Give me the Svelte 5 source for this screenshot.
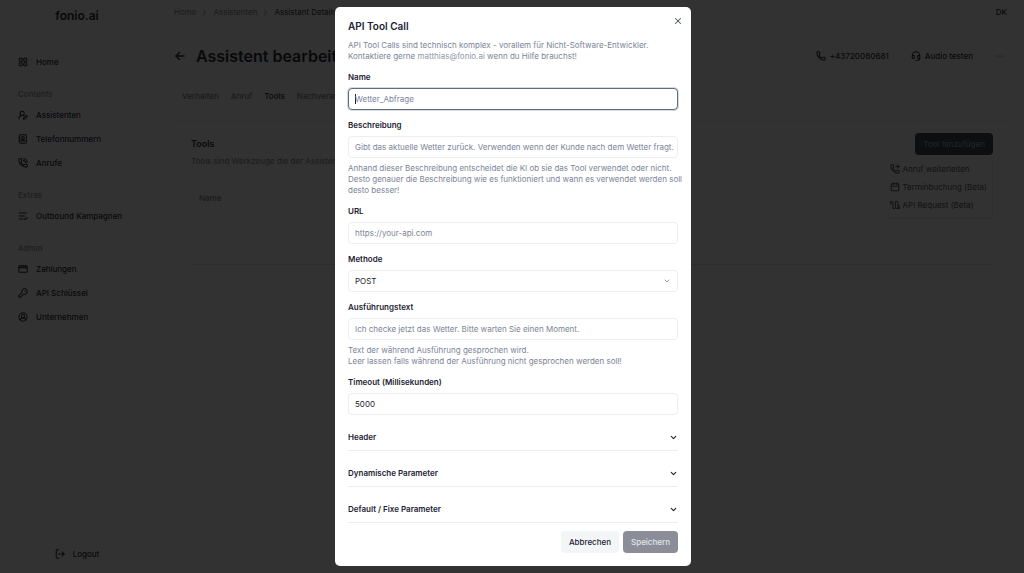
<script>
  const icons = {
    grid: ["M4 3h5a1 1 0 0 1 1 1v5a1 1 0 0 1-1 1H4a1 1 0 0 1-1-1V4a1 1 0 0 1 1-1z", "M15 3h5a1 1 0 0 1 1 1v5a1 1 0 0 1-1 1h-5a1 1 0 0 1-1-1V4a1 1 0 0 1 1-1z", "M15 14h5a1 1 0 0 1 1 1v5a1 1 0 0 1-1 1h-5a1 1 0 0 1-1-1v-5a1 1 0 0 1 1-1z", "M4 14h5a1 1 0 0 1 1 1v5a1 1 0 0 1-1 1H4a1 1 0 0 1-1-1v-5a1 1 0 0 1 1-1z"],
    userPen: ["M2 21a8 8 0 0 1 10.8-7.5", "M10 3a5 5 0 1 0 0 10a5 5 0 0 0 0-10z", "M21.4 16.6a2.1 2.1 0 0 0-3-3l-4 4a2 2 0 0 0-.5.9l-.8 2.8a.5.5 0 0 0 .6.6l2.8-.8a2 2 0 0 0 .9-.5z"],
    contact: ["M6 2h12a2 2 0 0 1 2 2v16a2 2 0 0 1-2 2H6a2 2 0 0 1-2-2V4a2 2 0 0 1 2-2z", "M12 6a3 3 0 1 0 0 6a3 3 0 0 0 0-6z", "M8 17v-1a2 2 0 0 1 2-2h4a2 2 0 0 1 2 2v1z", "M2 7h2", "M2 12h2", "M2 17h2"],
    phoneCall: ["M13.8 16.6a1 1 0 0 0 1.2-.3l.4-.5A2 2 0 0 1 17 15h3a2 2 0 0 1 2 2v3a2 2 0 0 1-2 2A18 18 0 0 1 2 4a2 2 0 0 1 2-2h3a2 2 0 0 1 2 2v3a2 2 0 0 1-.8 1.6l-.5.4a1 1 0 0 0-.3 1.2 14 14 0 0 0 6.4 6.4", "M13 2a9 9 0 0 1 9 9", "M13 6a5 5 0 0 1 5 5"],
    phone: ["M13.8 16.6a1 1 0 0 0 1.2-.3l.4-.5A2 2 0 0 1 17 15h3a2 2 0 0 1 2 2v3a2 2 0 0 1-2 2A18 18 0 0 1 2 4a2 2 0 0 1 2-2h3a2 2 0 0 1 2 2v3a2 2 0 0 1-.8 1.6l-.5.4a1 1 0 0 0-.3 1.2 14 14 0 0 0 6.4 6.4"],
    phoneForward: ["M13.8 16.6a1 1 0 0 0 1.2-.3l.4-.5A2 2 0 0 1 17 15h3a2 2 0 0 1 2 2v3a2 2 0 0 1-2 2A18 18 0 0 1 2 4a2 2 0 0 1 2-2h3a2 2 0 0 1 2 2v3a2 2 0 0 1-.8 1.6l-.5.4a1 1 0 0 0-.3 1.2 14 14 0 0 0 6.4 6.4", "M14 6h8", "M18 2l4 4-4 4"],
    list: ["M3 5h17", "M3 12h13", "M3 19h9", "M15 18l2.5 2.5L22 16"],
    card: ["M4 4h16a2 2 0 0 1 2 2v12a2 2 0 0 1-2 2H4a2 2 0 0 1-2-2V6a2 2 0 0 1 2-2z", "M2 9h20", "M7 4v5", "M12 4v5", "M17 4v5"],
    key: ["M2.6 17.4A2 2 0 0 0 2 18.8V21a1 1 0 0 0 1 1h3a1 1 0 0 0 1-1v-1a1 1 0 0 1 1-1h1a1 1 0 0 0 1-1v-1a1 1 0 0 1 1-1h.2a2 2 0 0 0 1.4-.6l.8-.8a6.5 6.5 0 1 0-4-4z", "M16.5 7.5h.01"],
    userCircle: ["M12 2a10 10 0 1 0 0 20a10 10 0 0 0 0-20z", "M12 6a4 4 0 1 0 0 8a4 4 0 0 0 0-8z", "M6 20v-2a3 3 0 0 1 3-3h6a3 3 0 0 1 3 3v2"],
    logout: ["M9 2H5a2 2 0 0 0-2 2v16a2 2 0 0 0 2 2h4", "M9 12h13", "M17 7l5 5-5 5"],
    arrowLeft: ["M11 19l-7-7 7-7", "M20 12H4"],
    headset: ["M3 11h3a2 2 0 0 1 2 2v3a2 2 0 0 1-2 2H5a2 2 0 0 1-2-2v-5a9 9 0 0 1 18 0v5a2 2 0 0 1-2 2h-1a2 2 0 0 1-2-2v-3a2 2 0 0 1 2-2h3", "M21 16v2a4 4 0 0 1-4 4h-5"],
    dots: ["M5 12h.01", "M12 12h.01", "M19 12h.01"],
    calendar: ["M5 4h14a2 2 0 0 1 2 2v13a2 2 0 0 1-2 2H5a2 2 0 0 1-2-2V6a2 2 0 0 1 2-2z", "M8 2v4", "M16 2v4", "M3 10h18"],
    route: ["M2 4h5v14a3 3 0 0 0 6 0V6a3 3 0 0 1 6 0v14", "M2 4v6", "M15 20h7", "M22 13v7"],
    chevronRight: ["M9 18l6-6-6-6"],
    chevronDown: ["M6 9l6 6 6-6"],
    close: ["M18 6L6 18", "M6 6l12 12"]
  }

  const navGroups = [
    { items: [{ icon: "grid", label: "Home" }] },
    {
      title: "Contents",
      items: [
        { icon: "userPen", label: "Assistenten" },
        { icon: "contact", label: "Telefonnummern" },
        { icon: "phoneCall", label: "Anrufe" }
      ]
    },
    { title: "Extras", items: [{ icon: "list", label: "Outbound Kampagnen" }] },
    {
      title: "Admin",
      items: [
        { icon: "card", label: "Zahlungen" },
        { icon: "key", label: "API Schlüssel" },
        { icon: "userCircle", label: "Unternehmen" }
      ]
    }
  ]

  const tabs = ["Verhalten", "Anruf", "Tools", "Nachverarbeitung"]

  const toolTypes = [
    { icon: "phoneForward", label: "Anruf weiterleiten" },
    { icon: "calendar", label: "Terminbuchung (Beta)" },
    { icon: "route", label: "API Request (Beta)" }
  ]

  const sections = ["Header", "Dynamische Parameter", "Default / Fixe Parameter"]

  let open = $state(true)
  let activeTab = $state("Tools")
  let name = $state("")
  let description = $state("")
  let url = $state("")
  let method = $state("POST")
  let speech = $state("")
  let timeout = $state("5000")

  let nameInput

  $effect(() => {
    if (open) nameInput?.focus()
  })
</script>

{#snippet icon(id)}
  <svg class="icon" viewBox="0 0 24 24" aria-hidden="true">
    {#each icons[id] as d}
      <path {d} />
    {/each}
  </svg>
{/snippet}

<div class="page">
  <aside>
    <a class="logo" href="#home">fonio.ai</a>
    <nav>
      {#each navGroups as group}
        <div class="group">
          {#if group.title}
            <h3>{group.title}</h3>
          {/if}
          {#each group.items as item}
            <a class="nav-item" href="#{item.icon}">{@render icon(item.icon)}{item.label}</a>
          {/each}
        </div>
      {/each}
    </nav>
    <button class="logout">{@render icon("logout")}Logout</button>
  </aside>

  <main>
    <header class="topbar">
      <div class="crumbs">
        <a href="#home">Home</a>
        {@render icon("chevronRight")}
        <a href="#assistants">Assistenten</a>
        {@render icon("chevronRight")}
        <span class="current">Assistant Details</span>
      </div>
      <span class="avatar">DK</span>
    </header>

    <div class="heading">
      <button class="back" aria-label="Zurück">{@render icon("arrowLeft")}</button>
      <h1>Assistent bearbeiten</h1>
      <div class="actions">
        <button>{@render icon("phone")}+43720080681</button>
        <button>{@render icon("headset")}Audio testen</button>
        <button aria-label="Mehr">{@render icon("dots")}</button>
      </div>
    </div>

    <div class="tabs" role="tablist">
      {#each tabs as tab}
        <button role="tab" aria-selected={tab === activeTab} class:active={tab === activeTab} onclick={() => (activeTab = tab)}>
          {tab}
        </button>
      {/each}
    </div>

    <section class="card">
      <div class="card-head">
        <div>
          <h2>Tools</h2>
          <p>Tools sind Werkzeuge die der Assistent verwenden kann.</p>
        </div>
        <div class="dropdown">
          <button class="add" onclick={() => (open = true)}>Tool hinzufügen</button>
          <div class="menu">
            {#each toolTypes as type}
              <button onclick={() => (open = true)}>{@render icon(type.icon)}{type.label}</button>
            {/each}
          </div>
        </div>
      </div>
      <table>
        <thead>
          <tr><th>Name</th></tr>
        </thead>
        <tbody>
          <tr><td></td></tr>
        </tbody>
      </table>
    </section>
  </main>
</div>

{#if open}
  <div class="overlay">
    <div class="dialog" role="dialog" aria-modal="true" aria-labelledby="dialog-title">
      <div class="title-row">
        <h2 id="dialog-title">API Tool Call</h2>
        <button class="close" aria-label="Schließen" onclick={() => (open = false)}>{@render icon("close")}</button>
      </div>
      <p class="intro">
        API Tool Calls sind technisch komplex - vorallem für Nicht-Software-Entwickler.<br />
        Kontaktiere gerne <a href="mailto:matthias@fonio.ai">matthias@fonio.ai</a> wenn du Hilfe brauchst!
      </p>

      <form onsubmit={(e) => e.preventDefault()}>
        <div class="field">
          <label for="name">Name</label>
          <input id="name" bind:this={nameInput} bind:value={name} placeholder="Wetter_Abfrage" autocomplete="off" />
        </div>
        <div class="field">
          <label for="description">Beschreibung</label>
          <input id="description" bind:value={description} placeholder="Gibt das aktuelle Wetter zurück. Verwenden wenn der Kunde nach dem Wetter fragt." />
          <p>
            Anhand dieser Beschreibung entscheidet die KI ob sie das Tool verwendet oder nicht.<br />
            Desto genauer die Beschreibung wie es funktioniert und wann es verwendet werden soll<br />
            desto besser!
          </p>
        </div>
        <div class="field">
          <label for="url">URL</label>
          <input id="url" bind:value={url} placeholder="https://your-api.com" />
        </div>
        <div class="field">
          <label for="method">Methode</label>
          <div class="select">
            <select id="method" bind:value={method}>
              <option>POST</option>
              <option>GET</option>
            </select>
            {@render icon("chevronDown")}
          </div>
        </div>
        <div class="field">
          <label for="speech">Ausführungstext</label>
          <input id="speech" bind:value={speech} placeholder="Ich checke jetzt das Wetter. Bitte warten Sie einen Moment." />
          <p>Text der während Ausführung gesprochen wird.<br />Leer lassen falls während der Ausführung nicht gesprochen werden soll!</p>
        </div>
        <div class="field">
          <label for="timeout">Timeout (Millisekunden)</label>
          <input id="timeout" bind:value={timeout} inputmode="numeric" />
        </div>

        {#each sections as section}
          <button type="button" class="section" aria-expanded="false">{section}{@render icon("chevronDown")}</button>
        {/each}

        <div class="buttons">
          <button type="button" class="cancel" onclick={() => (open = false)}>Abbrechen</button>
          <button type="submit" class="save" disabled>Speichern</button>
        </div>
      </form>
    </div>
  </div>
{/if}

<style>
  :global(body) {
    background: #fafafa;
    font-family: Inter, "Liberation Sans", sans-serif;
    font-size: 8px;
    line-height: 11px;
    color: #2c303a;
  }
  * {
    box-sizing: border-box;
  }
  h1,
  h2,
  h3,
  p {
    margin: 0;
  }
  a {
    color: inherit;
    text-decoration: none;
  }
  button,
  input,
  select {
    font: inherit;
    color: inherit;
    margin: 0;
  }
  button {
    display: flex;
    align-items: center;
    padding: 0;
    border: none;
    background: none;
    cursor: pointer;
  }
  .icon {
    flex: none;
    width: 10px;
    height: 10px;
    fill: none;
    stroke: currentColor;
    stroke-width: 2.5;
    stroke-linecap: round;
    stroke-linejoin: round;
  }

  .page {
    display: flex;
    min-height: 100vh;
  }
  aside {
    display: flex;
    flex-direction: column;
    flex: none;
    width: 154px;
    font-weight: 500;
  }
  .logo {
    height: 32px;
    font-size: 12px;
    font-weight: 600;
    line-height: 32px;
    text-align: center;
  }
  nav {
    flex: 1;
    display: flex;
    flex-direction: column;
    gap: 11px;
    padding: 18px 0 0 18px;
  }
  .group h3 {
    font-size: 8px;
    font-weight: 500;
    line-height: 18px;
    color: #90949c;
  }
  .nav-item {
    display: flex;
    align-items: center;
    gap: 8px;
    height: 24px;
  }
  .logout {
    justify-content: center;
    gap: 8px;
    height: 38px;
    font-weight: 500;
  }

  main {
    flex: 1;
    min-width: 0;
    padding: 0 14px 0 20px;
  }
  .topbar {
    display: flex;
    justify-content: space-between;
    align-items: center;
    height: 24px;
    padding-right: 3px;
  }
  .crumbs {
    display: flex;
    align-items: center;
    gap: 4px;
    color: #848894;
  }
  .crumbs .icon {
    width: 9px;
    height: 9px;
  }
  .current,
  .avatar {
    color: #2c303a;
  }
  .avatar {
    font-weight: 500;
  }
  .heading {
    display: flex;
    align-items: center;
    gap: 10px;
    height: 64px;
  }
  .back .icon {
    width: 12px;
    height: 12px;
    stroke-width: 3;
  }
  h1 {
    font-size: 16px;
    font-weight: 600;
  }
  .actions {
    display: flex;
    gap: 22px;
    margin-left: auto;
    padding-right: 5px;
    font-weight: 500;
  }
  .actions button {
    gap: 4px;
    font-weight: 500;
  }
  .tabs {
    display: flex;
    height: 16px;
    padding-left: 2px;
    font-weight: 500;
  }
  .tabs button {
    padding: 0 6px;
    color: #848894;
  }
  .tabs .active {
    color: #2c303a;
  }

  .card {
    margin-top: 16px;
    padding: 12px 16px 32px;
    border: 1px dotted #e6e6ea;
    border-radius: 6px;
  }
  .card-head {
    display: flex;
    justify-content: space-between;
    align-items: flex-start;
  }
  .card-head h2 {
    font-size: 9px;
    font-weight: 600;
    line-height: 22px;
  }
  .card-head p {
    line-height: 12px;
    color: #848894;
  }
  .dropdown {
    position: relative;
  }
  .add {
    height: 22px;
    padding: 0 8px;
    border-radius: 4px;
    background: #404550;
    color: #a8a8b0;
    font-weight: 500;
  }
  .menu {
    position: absolute;
    top: 26px;
    right: 0;
    padding: 1px 5px 4px;
    border-bottom: 1px dotted #c8c8cc;
    border-right: 1px dotted #d4d4d8;
    border-radius: 4px;
  }
  .menu button {
    gap: 3px;
    height: 18px;
    color: #555963;
    white-space: nowrap;
  }
  table {
    width: 100%;
    margin-top: 16px;
    border-collapse: collapse;
    border-bottom: 1px dotted #c8c8cc;
  }
  th {
    height: 30px;
    padding: 0 8px;
    text-align: left;
    font-weight: 500;
    color: #848894;
  }
  td {
    height: 51px;
    padding: 0;
  }

  .overlay {
    position: fixed;
    inset: 0;
    display: flex;
    align-items: center;
    justify-content: center;
    padding-left: 2px;
    background: rgba(0, 0, 0, 0.8);
  }
  .dialog {
    width: 356px;
    padding: 13px;
    border-radius: 5px;
    background: #fff;
    color: #1c2333;
  }
  .title-row {
    display: flex;
    justify-content: space-between;
    height: 12px;
    margin-right: -5px;
  }
  .title-row h2 {
    font-size: 10px;
    font-weight: 600;
    line-height: 12px;
  }
  .close {
    align-self: flex-start;
    height: 1px;
    color: #4a5264;
  }
  .intro,
  .field p {
    color: #7b8497;
    white-space: nowrap;
  }
  .intro {
    margin: 8px 0 10px;
  }
  .intro a {
    color: #8f97a8;
  }
  form {
    display: flex;
    flex-direction: column;
    gap: 10px;
  }
  .field {
    display: flex;
    flex-direction: column;
    gap: 5px;
  }
  label {
    font-weight: 600;
  }
  input,
  select {
    width: 100%;
    height: 22px;
    padding: 0 0 0 6px;
    border: 1px solid #eceef2;
    border-radius: 4px;
    background: #fff;
    outline: none;
  }
  input::placeholder {
    color: #7b8497;
    opacity: 1;
  }
  input:focus {
    border-color: #626b80;
    box-shadow: 0 0 0 1px #d5d9e1;
  }
  /* steady caret while the focused box is empty */
  input:focus:placeholder-shown {
    caret-color: transparent;
    background: linear-gradient(#1c2333, #1c2333) 6px center / 1px 10px no-repeat #fff;
  }
  .select {
    position: relative;
  }
  select {
    display: block;
    appearance: none;
  }
  .select .icon {
    position: absolute;
    top: 7px;
    right: 7px;
    width: 8px;
    height: 8px;
    color: #7b8497;
    pointer-events: none;
  }
  .section {
    justify-content: space-between;
    height: 26px;
    border-bottom: 1px solid #eceef2;
    font-weight: 600;
  }
  .section .icon {
    width: 9px;
    height: 9px;
    stroke-width: 3;
  }
  .buttons {
    display: flex;
    justify-content: flex-end;
    gap: 4px;
    margin-top: -2px;
  }
  .buttons button {
    height: 22px;
    padding: 0 8px;
    border-radius: 4px;
    font-weight: 500;
  }
  .buttons .cancel {
    background: #f4f5f7;
  }
  .buttons .save {
    background: #8b8e98;
    color: #e4e5e9;
  }
</style>
